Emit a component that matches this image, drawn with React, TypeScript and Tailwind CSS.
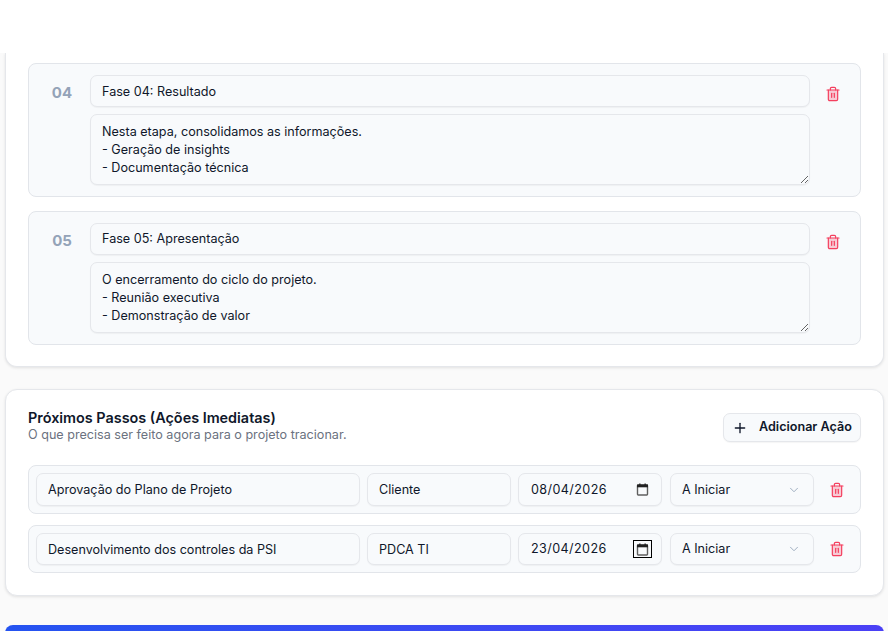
const font = "font-['Inter',sans-serif]";

function Trash({ className = "" }: { className?: string }) {
  return (
    <svg width="16" height="16" viewBox="0 0 24 24" fill="none" stroke="currentColor" strokeWidth="1.8" strokeLinecap="round" strokeLinejoin="round" className={className}>
      <path d="M3 6h18" />
      <path d="M19 6v14a2 2 0 0 1-2 2H7a2 2 0 0 1-2-2V6" fill="currentColor" fillOpacity="0.25" />
      <path d="M8 6V4a2 2 0 0 1 2-2h4a2 2 0 0 1 2 2v2" />
      <path d="M10 11v6" />
      <path d="M14 11v6" />
    </svg>
  );
}

const field = "bg-[#f8fafc] border border-[#e5e7eb] rounded-[7px] text-[12.6px] text-[#0f172a] shadow-[0_1px_1px_rgba(0,0,0,0.04)] outline-none";

function Phase({ num, title, body, nudge }: { num: string; title: string; body: string; nudge: string }) {
  return (
    <div className="flex bg-[#f8fafc] border border-[#e2e5ea] rounded-[8px] pt-[11px] pb-[11px] pl-[11px] pr-[12px]">
      <div className="w-[50px] shrink-0 pr-[6px] pt-[8px] text-center text-[15px] font-bold leading-[20px] text-[#94a3b8]">{num}</div>
      <div className="flex-1 flex flex-col gap-[7px]">
        <input readOnly value={title} className={`${field} h-[32px] px-[11px] ${nudge}`} />
        <textarea readOnly value={body} className={`${field} h-[71px] px-[11px] pt-[8px] pb-[6px] leading-[18px] block`} />
      </div>
      <div className="w-[38px] shrink-0 flex justify-end pr-[7px] pt-[11px]">
        <Trash className="text-[#f43f5e]" />
      </div>
    </div>
  );
}

function Cal({ focused }: { focused?: boolean }) {
  return (
    <span className={`w-[17px] h-[16px] flex items-center justify-center ${focused ? "outline outline-1 outline-black" : ""}`}>
      <svg width="13" height="13" viewBox="0 0 13 13" fill="none">
        <path d="M2.2 2h8.6a.7.7 0 0 1 .7.7v8.6a.7.7 0 0 1-.7.7H2.2a.7.7 0 0 1-.7-.7V2.700a.7.7 0 0 1 .7-.7z" stroke="#5f5f5f" strokeWidth="1.4" />
        <rect x="1" y="1.500" width="11" height="2.800" fill="#222" />
        <rect x="3.200" y="0.500" width="1.300" height="1.500" fill="#222" />
        <rect x="8.500" y="0.500" width="1.300" height="1.500" fill="#222" />
      </svg>
    </span>
  );
}

function Row({ task, who, date, focused, h, nudge }: { task: string; who: string; date: string; focused?: boolean; h: string; nudge: string }) {
  return (
    <div className="flex items-center gap-[7px] bg-[#f8fafc] border border-[#e2e5ea] rounded-[8px] px-[7px] py-[7px]">
      <input readOnly value={task} className={`${field} ${h} w-[324px] px-[11px]`} />
      <input readOnly value={who} className={`${field} ${h} w-[144px] px-[11px]`} />
      <div className={`${field} ${h} w-[144px] pl-[12px] pr-[10px] flex items-center justify-between tracking-[0.4px]`}>
        <span className={nudge}>{date}</span>
        <Cal focused={focused} />
      </div>
      <div className={`${field} ${h} ml-[1px] w-[144px] pl-[11px] pr-[12px] flex items-center justify-between`}>
        <span className={nudge}>A Iniciar</span>
        <svg width="14" height="14" viewBox="0 0 24 24" fill="none" stroke="#94a3b8" strokeWidth="1.5" strokeLinecap="round" strokeLinejoin="round"><path d="m6 9 6 6 6-6" /></svg>
      </div>
      <div className="flex-1 flex justify-center"><Trash className="text-[#f43f5e]" /></div>
    </div>
  );
}

export default function App() {
  return (
    <div className={`${font} w-[888px] h-[631px] overflow-hidden bg-[#fafafa] flex flex-col`}>
      <div className="h-[53px] shrink-0 bg-white" />
      <div className="flex-1 flex flex-col px-[5px] pr-[4px] overflow-hidden">
        <section className="shrink-0 bg-white border border-t-0 border-[#e5e7eb] rounded-b-[12px] shadow-[0_1px_3px_rgba(0,0,0,0.1)] px-[22px] pt-[10px] pb-[21px] flex flex-col gap-[14px]">
          <Phase num="04" nudge="" title="Fase 04: Resultado" body={"Nesta etapa, consolidamos as informações.\n- Geração de insights\n- Documentação técnica"} />
          <Phase num="05" nudge="pb-[2px]" title="Fase 05: Apresentação" body={"O encerramento do ciclo do projeto.\n- Reunião executiva\n- Demonstração de valor"} />
        </section>
        <section className="shrink-0 mt-[22px] bg-white border border-[#e5e7eb] rounded-[12px] shadow-[0_1px_3px_rgba(0,0,0,0.1)] px-[22px] pt-[19px] pb-[22px]">
          <div className="flex items-start justify-between">
            <div>
              <h2 className="text-[14.4px] font-semibold leading-[17px] text-[#0f172a]">Próximos Passos (Ações Imediatas)</h2>
              <p className="mt-[1px] text-[12.6px] leading-[16px] text-[#6b7280]">O que precisa ser feito agora para o projeto tracionar.</p>
            </div>
            <button className="mt-[4px] h-[29px] w-[138px] flex items-center gap-[11px] pl-[8px] bg-[#f8fafc] border border-[#e5e7eb] rounded-[7px] text-[12.6px] font-semibold text-[#0f172a] shadow-[0_1px_1px_rgba(0,0,0,0.04)]">
              <svg width="16" height="16" viewBox="0 0 24 24" fill="none" stroke="currentColor" strokeWidth="2" strokeLinecap="round"><path d="M5 12h14" /><path d="M12 5v14" /></svg>
              Adicionar Ação
            </button>
          </div>
          <div className="mt-[22px] flex flex-col gap-[11px]">
            <Row task="Aprovação do Plano de Projeto" who="Cliente" date="08/04/2026" h="h-[33px]" nudge="pt-[1px]" />
            <Row task="Desenvolvimento dos controles da PSI" who="PDCA TI" date="23/04/2026" focused h="h-[32px]" nudge="" />
          </div>
        </section>
        <div className="shrink-0 mt-[29px] h-[40px] rounded-t-[8px] bg-gradient-to-r from-[#2453f0] to-[#4a40f5]" />
      </div>
    </div>
  );
}
